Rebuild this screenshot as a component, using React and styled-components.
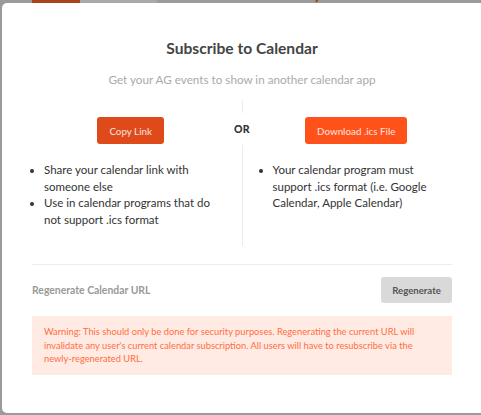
import styled, { createGlobalStyle } from 'styled-components';

const GlobalStyle = createGlobalStyle`
  * { box-sizing: border-box; }
  body {
    margin: 0;
    background: #9b9b9b;
    font-family: "Lato", "Noto Sans", sans-serif;
    overflow: hidden;
  }
`;

export default function App() {
  return (
    <>
      <GlobalStyle />
      <Page>
        <Toolbar>
          <TodayBtn>Today</TodayBtn>
          <JumpBtn>Jump to ▾</JumpBtn>
          <Spacer />
          <Chevron>‹</Chevron>
          <Month>May 2023</Month>
          <Chevron>▾</Chevron>
          <Chevron>›</Chevron>
        </Toolbar>

        <Modal>
          <Title>Subscribe to Calendar</Title>
          <Subtitle>Get your AG events to show in another calendar app</Subtitle>

          <Options>
            <ButtonCell side="left">
              <Button variant="dark">Copy Link</Button>
            </ButtonCell>
            <Divider>
              <Or>OR</Or>
            </Divider>
            <ButtonCell side="right">
              <Button variant="bright">Download .ics File</Button>
            </ButtonCell>
            <ListCell side="left">
              <List width={180}>
                <li>Share your calendar link with someone else</li>
                <li>Use in calendar programs that do not support .ics format</li>
              </List>
            </ListCell>
            <ListCell side="right">
              <List width={172}>
                <li>Your calendar program must support .ics format (i.e. Google Calendar, Apple Calendar)</li>
              </List>
            </ListCell>
          </Options>

          <Rule />

          <RegenRow>
            <RegenLabel>Regenerate Calendar URL</RegenLabel>
            <GreyButton>Regenerate</GreyButton>
          </RegenRow>

          <Warning>
            Warning: This should only be done for security purposes. Regenerating the current URL will
            invalidate any user's current calendar subscription. All users will have to resubscribe via the
            newly-regenerated URL.
          </Warning>
        </Modal>
      </Page>
    </>
  );
}

const Page = styled.div`
  position: relative;
  width: 481px;
  height: 415px;
  overflow: hidden;
`;

const Toolbar = styled.div`
  display: flex;
  align-items: flex-end;
  height: 22px;
  margin-top: -19px;
  padding-left: 32px;
  padding-right: 62px;
`;

const TodayBtn = styled.div`
  width: 48px;
  height: 22px;
  background: #a8421f;
  color: #7a2f15;
  font-size: 12px;
  text-align: center;
`;

const JumpBtn = styled.div`
  width: 77px;
  height: 22px;
  background: #a9a9a9;
  color: #444;
  font-size: 12px;
  padding-left: 14px;
`;

const Spacer = styled.div`
  flex: 1;
`;

const Chevron = styled.div`
  color: #222;
  font-size: 13px;
  margin: 0 10px;
`;

const Month = styled.div`
  color: #a83a14;
  font-weight: 700;
  font-size: 18px;
`;

const Modal = styled.div`
  position: absolute;
  left: 2px;
  top: 3px;
  width: 490px;
  height: 410px;
  background: #fff;
  border-radius: 5px;
  padding: 35px 40px 0 30px;
  display: flex;
  flex-direction: column;
`;

const Title = styled.h2`
  margin: 0;
  text-align: center;
  font-size: 15.6px;
  line-height: 20px;
  font-weight: 700;
  color: #444;
`;

const Subtitle = styled.p`
  margin: 13px 0 0;
  text-align: center;
  font-size: 11.7px;
  line-height: 16px;
  color: #aaa;
`;

const Options = styled.div`
  display: grid;
  grid-template-columns: 1fr 1px 1fr;
  grid-template-rows: auto auto;
  margin-top: 13px;
`;

const ButtonCell = styled.div`
  display: flex;
  justify-content: center;
  padding: ${(p) => (p.side === 'left' ? '17px 12px 0 0' : '17px 0 0 18px')};
`;

const ListCell = styled.div`
  padding: ${(p) => (p.side === 'left' ? '18px 12px 18px 0' : '18px 0 18px 18px')};
`;

const Divider = styled.div`
  grid-row: 1 / span 2;
  grid-column: 2;
  background: #ececec;
  position: relative;
`;

const Or = styled.span`
  position: absolute;
  top: 13px;
  left: 50%;
  transform: translateX(-50%);
  background: #fff;
  padding: 10px 6px;
  font-size: 10.5px;
  font-weight: 900;
  color: #333;
  letter-spacing: 0.3px;
`;

const Button = styled.button`
  height: 27px;
  padding: 0 12px;
  border: none;
  border-radius: 3px;
  font-family: inherit;
  font-size: 9.8px;
  font-weight: 500;
  color: rgba(255, 255, 255, 0.82);
  background: ${(p) => (p.variant === 'dark' ? '#df4a1b' : '#ff521b')};
  cursor: pointer;
`;

const List = styled.ul`
  margin: 0;
  padding-left: 12px;
  max-width: ${(p) => p.width}px;
  font-size: 11.5px;
  line-height: 16.5px;
  color: #333;
`;

const Rule = styled.hr`
  margin: 18px 0 0;
  border: none;
  border-top: 1px solid #ececec;
`;

const RegenRow = styled.div`
  display: flex;
  justify-content: space-between;
  align-items: center;
  margin-top: 12px;
`;

const RegenLabel = styled.span`
  font-size: 10.4px;
  font-weight: 700;
  color: #999;
`;

const GreyButton = styled.button`
  width: 71px;
  height: 26px;
  border: none;
  border-radius: 3px;
  background: #d9d9d9;
  color: #555;
  font-family: inherit;
  font-size: 9.6px;
  font-weight: 700;
`;

const Warning = styled.div`
  margin-top: 13px;
  background: #ffebe4;
  color: #ff6e40;
  font-size: 9.3px;
  line-height: 13.5px;
  padding: 9px 12px;
`;
